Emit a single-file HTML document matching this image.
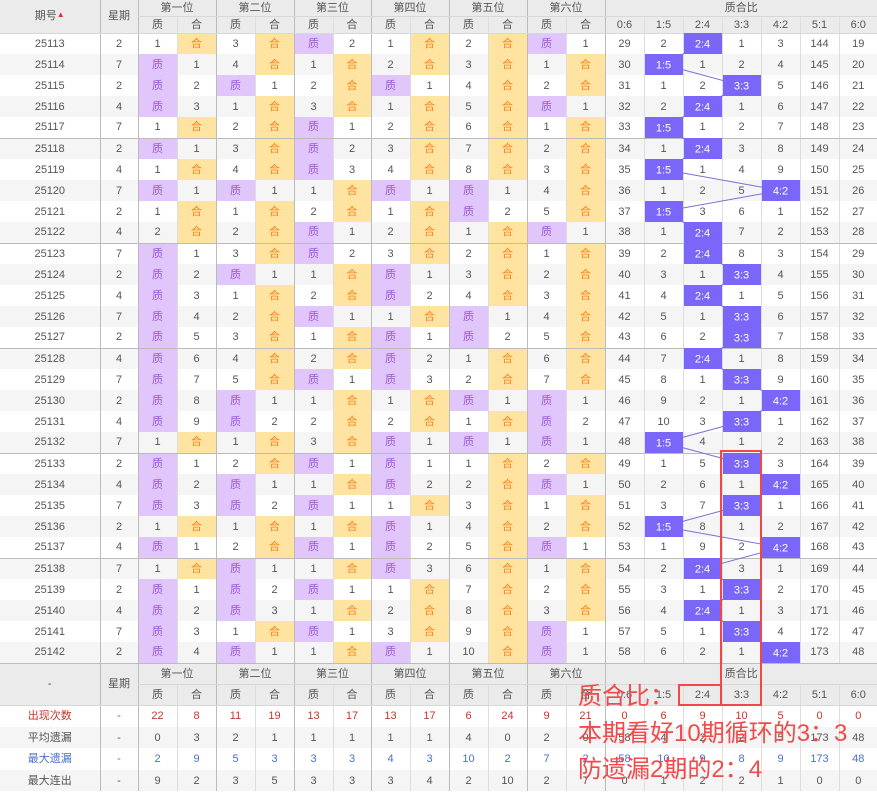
<!DOCTYPE html>
<html><head><meta charset="utf-8"><style>
*{margin:0;padding:0;box-sizing:border-box}
body{width:877px;height:792px;overflow:hidden;background:#fff;font-family:"Liberation Sans","Noto Sans CJK SC",sans-serif;position:relative}
table{border-collapse:collapse;table-layout:fixed;width:877px;position:absolute;left:0;top:0}
td,th{text-align:center;font-size:11px;color:#555;font-weight:normal;padding:0;line-height:12px;border-left:1px solid #ddd;overflow:hidden;white-space:nowrap}
th{background:#ebebeb;border-bottom:1px solid #d8d8d8}
tr.d{height:21px}
tr.d:nth-child(even) td{background:#f5f5f5}
tr.d td.z{background:#e0c6fb;color:#9b5bd0}
tr.d td.h{background:#ffe3a0;color:#f5841f}
tr.s td{border-bottom:1px solid #bbb}
.g{border-left:1px solid #bbb!important}
.red td{color:#c0392b}
.blue td{color:#4a6fd0}
.bx{position:absolute;border:2px solid #f04848}
.ann{position:absolute;left:578px;top:679px;color:#f24a4a;font-size:24px;line-height:36.5px;font-family:"Liberation Sans","Noto Sans CJK SC",sans-serif;white-space:nowrap}
</style></head><body>
<table>
<colgroup><col style="width:100px"><col style="width:38px">
<col style="width:39px"><col style="width:39px"><col style="width:39px"><col style="width:39px"><col style="width:39px"><col style="width:38px"><col style="width:39px"><col style="width:39px"><col style="width:39px"><col style="width:39px"><col style="width:39px"><col style="width:39px">
<col style="width:39px"><col style="width:39px"><col style="width:39px"><col style="width:39px"><col style="width:39px"><col style="width:39px"><col style="width:38px"></colgroup>
<tr style="height:16px"><th rowspan="2" style="border-left:none">期号<span style="font-size:8px;color:#d33;position:relative;top:-2px">▲</span></th><th rowspan="2" class="g">星期</th><th colspan="2" class="g">第一位</th><th colspan="2" class="g">第二位</th><th colspan="2" class="g">第三位</th><th colspan="2" class="g">第四位</th><th colspan="2" class="g">第五位</th><th colspan="2" class="g">第六位</th><th colspan="7" class="g">质合比</th></tr>
<tr style="height:17px"><th class="g">质</th><th>合</th><th class="g">质</th><th>合</th><th class="g">质</th><th>合</th><th class="g">质</th><th>合</th><th class="g">质</th><th>合</th><th class="g">质</th><th>合</th><th class="g">0:6</th><th>1:5</th><th>2:4</th><th>3:3</th><th>4:2</th><th>5:1</th><th>6:0</th></tr>
<tr class="d"><td style="border-left:none">25113</td><td class="g">2</td><td class="g">1</td><td class="h">合</td><td class="g">3</td><td class="h">合</td><td class="g z">质</td><td>2</td><td class="g">1</td><td class="h">合</td><td class="g">2</td><td class="h">合</td><td class="g z">质</td><td>1</td><td class="g">29</td><td>2</td><td></td><td>1</td><td>3</td><td>144</td><td>19</td></tr>
<tr class="d"><td style="border-left:none">25114</td><td class="g">7</td><td class="g z">质</td><td>1</td><td class="g">4</td><td class="h">合</td><td class="g">1</td><td class="h">合</td><td class="g">2</td><td class="h">合</td><td class="g">3</td><td class="h">合</td><td class="g">1</td><td class="h">合</td><td class="g">30</td><td></td><td>1</td><td>2</td><td>4</td><td>145</td><td>20</td></tr>
<tr class="d"><td style="border-left:none">25115</td><td class="g">2</td><td class="g z">质</td><td>2</td><td class="g z">质</td><td>1</td><td class="g">2</td><td class="h">合</td><td class="g z">质</td><td>1</td><td class="g">4</td><td class="h">合</td><td class="g">2</td><td class="h">合</td><td class="g">31</td><td>1</td><td>2</td><td></td><td>5</td><td>146</td><td>21</td></tr>
<tr class="d"><td style="border-left:none">25116</td><td class="g">4</td><td class="g z">质</td><td>3</td><td class="g">1</td><td class="h">合</td><td class="g">3</td><td class="h">合</td><td class="g">1</td><td class="h">合</td><td class="g">5</td><td class="h">合</td><td class="g z">质</td><td>1</td><td class="g">32</td><td>2</td><td></td><td>1</td><td>6</td><td>147</td><td>22</td></tr>
<tr class="d s"><td style="border-left:none">25117</td><td class="g">7</td><td class="g">1</td><td class="h">合</td><td class="g">2</td><td class="h">合</td><td class="g z">质</td><td>1</td><td class="g">2</td><td class="h">合</td><td class="g">6</td><td class="h">合</td><td class="g">1</td><td class="h">合</td><td class="g">33</td><td></td><td>1</td><td>2</td><td>7</td><td>148</td><td>23</td></tr>
<tr class="d"><td style="border-left:none">25118</td><td class="g">2</td><td class="g z">质</td><td>1</td><td class="g">3</td><td class="h">合</td><td class="g z">质</td><td>2</td><td class="g">3</td><td class="h">合</td><td class="g">7</td><td class="h">合</td><td class="g">2</td><td class="h">合</td><td class="g">34</td><td>1</td><td></td><td>3</td><td>8</td><td>149</td><td>24</td></tr>
<tr class="d"><td style="border-left:none">25119</td><td class="g">4</td><td class="g">1</td><td class="h">合</td><td class="g">4</td><td class="h">合</td><td class="g z">质</td><td>3</td><td class="g">4</td><td class="h">合</td><td class="g">8</td><td class="h">合</td><td class="g">3</td><td class="h">合</td><td class="g">35</td><td></td><td>1</td><td>4</td><td>9</td><td>150</td><td>25</td></tr>
<tr class="d"><td style="border-left:none">25120</td><td class="g">7</td><td class="g z">质</td><td>1</td><td class="g z">质</td><td>1</td><td class="g">1</td><td class="h">合</td><td class="g z">质</td><td>1</td><td class="g z">质</td><td>1</td><td class="g">4</td><td class="h">合</td><td class="g">36</td><td>1</td><td>2</td><td>5</td><td></td><td>151</td><td>26</td></tr>
<tr class="d"><td style="border-left:none">25121</td><td class="g">2</td><td class="g">1</td><td class="h">合</td><td class="g">1</td><td class="h">合</td><td class="g">2</td><td class="h">合</td><td class="g">1</td><td class="h">合</td><td class="g z">质</td><td>2</td><td class="g">5</td><td class="h">合</td><td class="g">37</td><td></td><td>3</td><td>6</td><td>1</td><td>152</td><td>27</td></tr>
<tr class="d s"><td style="border-left:none">25122</td><td class="g">4</td><td class="g">2</td><td class="h">合</td><td class="g">2</td><td class="h">合</td><td class="g z">质</td><td>1</td><td class="g">2</td><td class="h">合</td><td class="g">1</td><td class="h">合</td><td class="g z">质</td><td>1</td><td class="g">38</td><td>1</td><td></td><td>7</td><td>2</td><td>153</td><td>28</td></tr>
<tr class="d"><td style="border-left:none">25123</td><td class="g">7</td><td class="g z">质</td><td>1</td><td class="g">3</td><td class="h">合</td><td class="g z">质</td><td>2</td><td class="g">3</td><td class="h">合</td><td class="g">2</td><td class="h">合</td><td class="g">1</td><td class="h">合</td><td class="g">39</td><td>2</td><td></td><td>8</td><td>3</td><td>154</td><td>29</td></tr>
<tr class="d"><td style="border-left:none">25124</td><td class="g">2</td><td class="g z">质</td><td>2</td><td class="g z">质</td><td>1</td><td class="g">1</td><td class="h">合</td><td class="g z">质</td><td>1</td><td class="g">3</td><td class="h">合</td><td class="g">2</td><td class="h">合</td><td class="g">40</td><td>3</td><td>1</td><td></td><td>4</td><td>155</td><td>30</td></tr>
<tr class="d"><td style="border-left:none">25125</td><td class="g">4</td><td class="g z">质</td><td>3</td><td class="g">1</td><td class="h">合</td><td class="g">2</td><td class="h">合</td><td class="g z">质</td><td>2</td><td class="g">4</td><td class="h">合</td><td class="g">3</td><td class="h">合</td><td class="g">41</td><td>4</td><td></td><td>1</td><td>5</td><td>156</td><td>31</td></tr>
<tr class="d"><td style="border-left:none">25126</td><td class="g">7</td><td class="g z">质</td><td>4</td><td class="g">2</td><td class="h">合</td><td class="g z">质</td><td>1</td><td class="g">1</td><td class="h">合</td><td class="g z">质</td><td>1</td><td class="g">4</td><td class="h">合</td><td class="g">42</td><td>5</td><td>1</td><td></td><td>6</td><td>157</td><td>32</td></tr>
<tr class="d s"><td style="border-left:none">25127</td><td class="g">2</td><td class="g z">质</td><td>5</td><td class="g">3</td><td class="h">合</td><td class="g">1</td><td class="h">合</td><td class="g z">质</td><td>1</td><td class="g z">质</td><td>2</td><td class="g">5</td><td class="h">合</td><td class="g">43</td><td>6</td><td>2</td><td></td><td>7</td><td>158</td><td>33</td></tr>
<tr class="d"><td style="border-left:none">25128</td><td class="g">4</td><td class="g z">质</td><td>6</td><td class="g">4</td><td class="h">合</td><td class="g">2</td><td class="h">合</td><td class="g z">质</td><td>2</td><td class="g">1</td><td class="h">合</td><td class="g">6</td><td class="h">合</td><td class="g">44</td><td>7</td><td></td><td>1</td><td>8</td><td>159</td><td>34</td></tr>
<tr class="d"><td style="border-left:none">25129</td><td class="g">7</td><td class="g z">质</td><td>7</td><td class="g">5</td><td class="h">合</td><td class="g z">质</td><td>1</td><td class="g z">质</td><td>3</td><td class="g">2</td><td class="h">合</td><td class="g">7</td><td class="h">合</td><td class="g">45</td><td>8</td><td>1</td><td></td><td>9</td><td>160</td><td>35</td></tr>
<tr class="d"><td style="border-left:none">25130</td><td class="g">2</td><td class="g z">质</td><td>8</td><td class="g z">质</td><td>1</td><td class="g">1</td><td class="h">合</td><td class="g">1</td><td class="h">合</td><td class="g z">质</td><td>1</td><td class="g z">质</td><td>1</td><td class="g">46</td><td>9</td><td>2</td><td>1</td><td></td><td>161</td><td>36</td></tr>
<tr class="d"><td style="border-left:none">25131</td><td class="g">4</td><td class="g z">质</td><td>9</td><td class="g z">质</td><td>2</td><td class="g">2</td><td class="h">合</td><td class="g">2</td><td class="h">合</td><td class="g">1</td><td class="h">合</td><td class="g z">质</td><td>2</td><td class="g">47</td><td>10</td><td>3</td><td></td><td>1</td><td>162</td><td>37</td></tr>
<tr class="d s"><td style="border-left:none">25132</td><td class="g">7</td><td class="g">1</td><td class="h">合</td><td class="g">1</td><td class="h">合</td><td class="g">3</td><td class="h">合</td><td class="g z">质</td><td>1</td><td class="g z">质</td><td>1</td><td class="g z">质</td><td>1</td><td class="g">48</td><td></td><td>4</td><td>1</td><td>2</td><td>163</td><td>38</td></tr>
<tr class="d"><td style="border-left:none">25133</td><td class="g">2</td><td class="g z">质</td><td>1</td><td class="g">2</td><td class="h">合</td><td class="g z">质</td><td>1</td><td class="g z">质</td><td>1</td><td class="g">1</td><td class="h">合</td><td class="g">2</td><td class="h">合</td><td class="g">49</td><td>1</td><td>5</td><td></td><td>3</td><td>164</td><td>39</td></tr>
<tr class="d"><td style="border-left:none">25134</td><td class="g">4</td><td class="g z">质</td><td>2</td><td class="g z">质</td><td>1</td><td class="g">1</td><td class="h">合</td><td class="g z">质</td><td>2</td><td class="g">2</td><td class="h">合</td><td class="g z">质</td><td>1</td><td class="g">50</td><td>2</td><td>6</td><td>1</td><td></td><td>165</td><td>40</td></tr>
<tr class="d"><td style="border-left:none">25135</td><td class="g">7</td><td class="g z">质</td><td>3</td><td class="g z">质</td><td>2</td><td class="g z">质</td><td>1</td><td class="g">1</td><td class="h">合</td><td class="g">3</td><td class="h">合</td><td class="g">1</td><td class="h">合</td><td class="g">51</td><td>3</td><td>7</td><td></td><td>1</td><td>166</td><td>41</td></tr>
<tr class="d"><td style="border-left:none">25136</td><td class="g">2</td><td class="g">1</td><td class="h">合</td><td class="g">1</td><td class="h">合</td><td class="g">1</td><td class="h">合</td><td class="g z">质</td><td>1</td><td class="g">4</td><td class="h">合</td><td class="g">2</td><td class="h">合</td><td class="g">52</td><td></td><td>8</td><td>1</td><td>2</td><td>167</td><td>42</td></tr>
<tr class="d s"><td style="border-left:none">25137</td><td class="g">4</td><td class="g z">质</td><td>1</td><td class="g">2</td><td class="h">合</td><td class="g z">质</td><td>1</td><td class="g z">质</td><td>2</td><td class="g">5</td><td class="h">合</td><td class="g z">质</td><td>1</td><td class="g">53</td><td>1</td><td>9</td><td>2</td><td></td><td>168</td><td>43</td></tr>
<tr class="d"><td style="border-left:none">25138</td><td class="g">7</td><td class="g">1</td><td class="h">合</td><td class="g z">质</td><td>1</td><td class="g">1</td><td class="h">合</td><td class="g z">质</td><td>3</td><td class="g">6</td><td class="h">合</td><td class="g">1</td><td class="h">合</td><td class="g">54</td><td>2</td><td></td><td>3</td><td>1</td><td>169</td><td>44</td></tr>
<tr class="d"><td style="border-left:none">25139</td><td class="g">2</td><td class="g z">质</td><td>1</td><td class="g z">质</td><td>2</td><td class="g z">质</td><td>1</td><td class="g">1</td><td class="h">合</td><td class="g">7</td><td class="h">合</td><td class="g">2</td><td class="h">合</td><td class="g">55</td><td>3</td><td>1</td><td></td><td>2</td><td>170</td><td>45</td></tr>
<tr class="d"><td style="border-left:none">25140</td><td class="g">4</td><td class="g z">质</td><td>2</td><td class="g z">质</td><td>3</td><td class="g">1</td><td class="h">合</td><td class="g">2</td><td class="h">合</td><td class="g">8</td><td class="h">合</td><td class="g">3</td><td class="h">合</td><td class="g">56</td><td>4</td><td></td><td>1</td><td>3</td><td>171</td><td>46</td></tr>
<tr class="d"><td style="border-left:none">25141</td><td class="g">7</td><td class="g z">质</td><td>3</td><td class="g">1</td><td class="h">合</td><td class="g z">质</td><td>1</td><td class="g">3</td><td class="h">合</td><td class="g">9</td><td class="h">合</td><td class="g z">质</td><td>1</td><td class="g">57</td><td>5</td><td>1</td><td></td><td>4</td><td>172</td><td>47</td></tr>
<tr class="d s"><td style="border-left:none">25142</td><td class="g">2</td><td class="g z">质</td><td>4</td><td class="g z">质</td><td>1</td><td class="g">1</td><td class="h">合</td><td class="g z">质</td><td>1</td><td class="g">10</td><td class="h">合</td><td class="g z">质</td><td>1</td><td class="g">58</td><td>6</td><td>2</td><td>1</td><td></td><td>173</td><td>48</td></tr>
<tr style="height:21px"><th rowspan="2" style="border-left:none">-</th><th rowspan="2" class="g">星期</th><th colspan="2" class="g">第一位</th><th colspan="2" class="g">第二位</th><th colspan="2" class="g">第三位</th><th colspan="2" class="g">第四位</th><th colspan="2" class="g">第五位</th><th colspan="2" class="g">第六位</th><th colspan="7" class="g">质合比</th></tr>
<tr style="height:21px"><th class="g">质</th><th>合</th><th class="g">质</th><th>合</th><th class="g">质</th><th>合</th><th class="g">质</th><th>合</th><th class="g">质</th><th>合</th><th class="g">质</th><th>合</th><th class="g">0:6</th><th>1:5</th><th>2:4</th><th>3:3</th><th>4:2</th><th>5:1</th><th>6:0</th></tr>
<tr style="height:22px" class="red"><td style="border-left:none">出现次数</td><td class="g">-</td><td class="g">22</td><td>8</td><td class="g">11</td><td>19</td><td class="g">13</td><td>17</td><td class="g">13</td><td>17</td><td class="g">6</td><td>24</td><td class="g">9</td><td>21</td><td class="g">0</td><td>6</td><td>9</td><td>10</td><td>5</td><td>0</td><td>0</td></tr>
<tr style="height:21px;background:#f5f5f5"><td style="border-left:none">平均遗漏</td><td class="g">-</td><td class="g">0</td><td>3</td><td class="g">2</td><td>1</td><td class="g">1</td><td>1</td><td class="g">1</td><td>1</td><td class="g">4</td><td>0</td><td class="g">2</td><td>0</td><td class="g">58</td><td>4</td><td>2</td><td>2</td><td>5</td><td>173</td><td>48</td></tr>
<tr style="height:22px" class="blue"><td style="border-left:none">最大遗漏</td><td class="g">-</td><td class="g">2</td><td>9</td><td class="g">5</td><td>3</td><td class="g">3</td><td>3</td><td class="g">4</td><td>3</td><td class="g">10</td><td>2</td><td class="g">7</td><td>2</td><td class="g">58</td><td>10</td><td>9</td><td>8</td><td>9</td><td>173</td><td>48</td></tr>
<tr style="height:21px;background:#f5f5f5"><td style="border-left:none">最大连出</td><td class="g">-</td><td class="g">9</td><td>2</td><td class="g">3</td><td>5</td><td class="g">3</td><td>3</td><td class="g">3</td><td>4</td><td class="g">2</td><td>10</td><td class="g">2</td><td>7</td><td class="g">0</td><td>1</td><td>2</td><td>2</td><td>1</td><td>0</td><td>0</td></tr>
</table>
<svg width="877" height="792" style="position:absolute;left:0;top:0" font-family="Liberation Sans" font-size="11">
<polyline fill="none" stroke="#7a70d8" stroke-width="1" points="702.5,43.5 663.5,64.5 741.5,85.5 702.5,106.5 663.5,127.5 702.5,148.5 663.5,169.5 780.5,190.5 663.5,211.5 702.5,232.5 702.5,253.5 741.5,274.5 702.5,295.5 741.5,316.5 741.5,337.5 702.5,358.5 741.5,379.5 780.5,400.5 741.5,421.5 663.5,442.5 741.5,463.5 780.5,484.5 741.5,505.5 663.5,526.5 780.5,547.5 702.5,568.5 741.5,589.5 702.5,610.5 741.5,631.5 780.5,652.5"/>
<g fill="#7a66f8">
<rect x="684" y="33" width="38" height="21"/><rect x="645" y="54" width="38" height="21"/><rect x="723" y="75" width="38" height="21"/><rect x="684" y="96" width="38" height="21"/><rect x="645" y="117" width="38" height="21"/><rect x="684" y="138" width="38" height="21"/><rect x="645" y="159" width="38" height="21"/><rect x="762" y="180" width="38" height="21"/><rect x="645" y="201" width="38" height="21"/><rect x="684" y="222" width="38" height="21"/><rect x="684" y="243" width="38" height="21"/><rect x="723" y="264" width="38" height="21"/><rect x="684" y="285" width="38" height="21"/><rect x="723" y="306" width="38" height="21"/><rect x="723" y="327" width="38" height="21"/><rect x="684" y="348" width="38" height="21"/><rect x="723" y="369" width="38" height="21"/><rect x="762" y="390" width="38" height="21"/><rect x="723" y="411" width="38" height="21"/><rect x="645" y="432" width="38" height="21"/><rect x="723" y="453" width="38" height="21"/><rect x="762" y="474" width="38" height="21"/><rect x="723" y="495" width="38" height="21"/><rect x="645" y="516" width="38" height="21"/><rect x="762" y="537" width="38" height="21"/><rect x="684" y="558" width="38" height="21"/><rect x="723" y="579" width="38" height="21"/><rect x="684" y="600" width="38" height="21"/><rect x="723" y="621" width="38" height="21"/><rect x="762" y="642" width="38" height="21"/>
</g>
<g fill="#fff" text-anchor="middle">
<text x="702.5" y="47.5">2:4</text><text x="663.5" y="68.5">1:5</text><text x="741.5" y="89.5">3:3</text><text x="702.5" y="110.5">2:4</text><text x="663.5" y="131.5">1:5</text><text x="702.5" y="152.5">2:4</text><text x="663.5" y="173.5">1:5</text><text x="780.5" y="194.5">4:2</text><text x="663.5" y="215.5">1:5</text><text x="702.5" y="236.5">2:4</text><text x="702.5" y="257.5">2:4</text><text x="741.5" y="278.5">3:3</text><text x="702.5" y="299.5">2:4</text><text x="741.5" y="320.5">3:3</text><text x="741.5" y="341.5">3:3</text><text x="702.5" y="362.5">2:4</text><text x="741.5" y="383.5">3:3</text><text x="780.5" y="404.5">4:2</text><text x="741.5" y="425.5">3:3</text><text x="663.5" y="446.5">1:5</text><text x="741.5" y="467.5">3:3</text><text x="780.5" y="488.5">4:2</text><text x="741.5" y="509.5">3:3</text><text x="663.5" y="530.5">1:5</text><text x="780.5" y="551.5">4:2</text><text x="702.5" y="572.5">2:4</text><text x="741.5" y="593.5">3:3</text><text x="702.5" y="614.5">2:4</text><text x="741.5" y="635.5">3:3</text><text x="780.5" y="656.5">4:2</text>
</g>
</svg>
<div class="bx" style="left:720px;top:450px;width:42px;height:256px"></div>
<div class="bx" style="left:678px;top:684px;width:44px;height:22px"></div>
<div class="ann">质合比：<br>本期看好10期循环的3：3<br>防遗漏2期的2：4</div>
</body></html>
